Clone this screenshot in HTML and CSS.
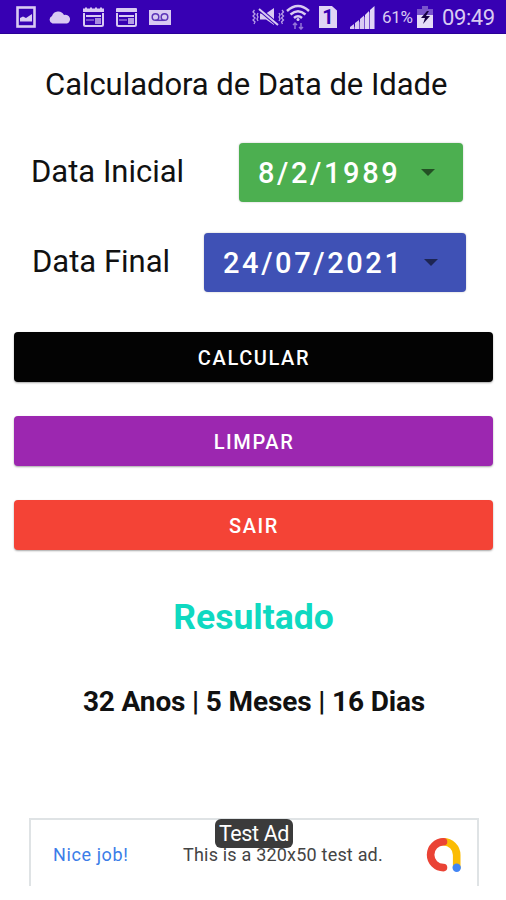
FILE: index.html
```html
<!DOCTYPE html>
<html lang="pt-BR">
<head>
    <meta charset="utf-8">
    <title>Calculadora de Data de Idade</title>
    <link rel="stylesheet" href="styles.css">
</head>
<body>
<div class="status-bar">
    <div class="status-left">
        <svg width="20" height="22" viewBox="0 0 20 22">
            <rect x="1.5" y="1.5" width="17" height="19" fill="none" stroke="#d9caf2" stroke-width="2.6"/>
            <path d="M4 15.500V12l3-1.500 3 1.500 6-4v7.500z" fill="#d9caf2"/>
        </svg>
        <svg width="23" height="14" viewBox="0 0 23 14">
            <path d="M4.500 13.500a4 4 0 0 1-.5-7.500A6.500 6.500 0 0 1 16 5a4.300 4.300 0 0 1 3 8.500z" fill="#d9caf2"/>
        </svg>
        <svg width="21" height="20" viewBox="0 0 21 20">
            <path d="M0 5V1.500h2V.5h2v1h3v-1h2v1h3v-1h2v1h3v-1h2v1h2V5z" fill="#d9caf2"/>
            <path d="M1 6v11.500q0 1.500 1.500 1.500h16q1.500 0 1.500-1.500V6" fill="none" stroke="#d9caf2" stroke-width="2"/>
            <path d="M3 9h15" stroke="#d9caf2" stroke-width="2"/>
            <path d="M3 13h8" stroke="#8f6ad5" stroke-width="1.500"/>
            <rect x="12" y="11" width="6" height="6" fill="#a98be0"/>
        </svg>
        <svg width="21" height="20" viewBox="0 0 21 20">
            <path d="M0 5V1.500q0-.5 1-.5h19q1 0 1 .5V5z" fill="#d9caf2"/>
            <path d="M1 6v11.500q0 1.500 1.500 1.500h16q1.500 0 1.500-1.500V6" fill="none" stroke="#d9caf2" stroke-width="2"/>
            <path d="M3 9h15" stroke="#d9caf2" stroke-width="2"/>
            <path d="M3 13h8" stroke="#8f6ad5" stroke-width="1.500"/>
            <rect x="12" y="11" width="6" height="6" fill="#b59be5"/>
        </svg>
        <svg width="22" height="15" viewBox="0 0 22 15">
            <rect width="22" height="15" fill="#d9caf2"/>
            <circle cx="6.500" cy="7" r="3.300" fill="none" stroke="#5c35b8" stroke-width="1.500"/>
            <circle cx="15.500" cy="7" r="3.300" fill="none" stroke="#5c35b8" stroke-width="1.500"/>
            <path d="M6.500 10.300h9" stroke="#5c35b8" stroke-width="1.500"/>
        </svg>
    </div>
    <div class="status-right">
        <svg class="mute" width="33" height="20" viewBox="0 0 33 20">
            <path d="M2.500 3l-1.500 2 2 2-2 2 2 2-2 2 2 2-1 2M6 6l-1 2 1 2-1 2 1 2M30 3l1.500 2-2 2 2 2-2 2 2 2-2 2 1 2M27 6l1 2-1 2 1 2-1 2" fill="none" stroke="#b79ee6" stroke-width="1.300"/>
            <path d="M8 6.500h6l8-5.500v17l-8-5.500H8z" fill="#d9caf2"/>
            <path d="M7 2l19 16" stroke="#3700b3" stroke-width="4"/>
            <path d="M7 2l19 16" stroke="#d9caf2" stroke-width="2"/>
        </svg>
        <svg class="wifi" width="24" height="26" viewBox="0 0 24 26">
            <g fill="none" stroke="#d9caf2" stroke-width="2.500">
                <path d="M1 7q11-10 22 0"/>
                <path d="M4.500 10.500q7.500-6.500 15 0"/>
                <path d="M8 14q4-3.500 8 0"/>
            </g>
            <circle cx="12" cy="15.500" r="1.500" fill="#d9caf2"/>
            <path d="M9 25v-6m-2 2l2-2 2 2M15 19v6m-2-2l2 2 2-2" fill="none" stroke="#9474d8" stroke-width="1.500"/>
        </svg>
        <div class="sim">1</div>
        <svg class="signal" width="25" height="23" viewBox="0 0 25 23">
            <path d="M0 23v-2l4-3v5zM5 23v-6l4-3v9zM10 23V13l4-3.500V23z" fill="#d9caf2"/>
            <path d="M15 23V9l4-4v18zM20 23V4l4.500-4v23z" fill="#e6dcf7"/>
            <path d="M2 23L24 2v21z" fill="#d9caf2" opacity="0.4"/>
        </svg>
        <span class="percent">61%</span>
        <svg class="battery" width="16" height="22" viewBox="0 0 16 22">
            <path d="M0 3h5V0h6v3h5v7H0z" fill="#7953cc"/>
            <path d="M0 9h16v13H0z" fill="#e6dcf7"/>
            <path d="M10 5l-6 7h4l-2 6 7-8H9l3-5z" fill="#170044"/>
        </svg>
        <span class="time">09:49</span>
    </div>
</div>

<div class="container">
    <h1>Calculadora de Data de Idade</h1>
    <div class="date-row">
        <label>Data Inicial</label>
        <button class="date date-start"><span>8/2/1989</span><i class="arrow"></i></button>
    </div>
    <div class="date-row date-row-end">
        <label>Data Final</label>
        <button class="date date-end"><span>24/07/2021</span><i class="arrow"></i></button>
    </div>
    <div class="actions">
        <button class="action calculate">CALCULAR</button>
        <button class="action clear">LIMPAR</button>
        <button class="action exit">SAIR</button>
    </div>
    <h2>Resultado</h2>
    <p class="result">32 Anos | 5 Meses | 16 Dias</p>
</div>

<div class="ad">
    <span class="ad-label">Test Ad</span>
    <span class="ad-title">Nice job!</span>
    <span class="ad-text">This is a 320x50 test ad.</span>
    <svg class="ad-logo" width="36" height="36" viewBox="0 0 36 36">
        <g fill="none" stroke-width="7.600" stroke-linecap="round">
            <path d="M17.500 4.800A13.200 13.200 0 0 1 30.700 18v12" stroke="#fbbc04"/>
            <path d="M17.500 4.800a12.900 12.900 0 0 0 0 25.800" stroke="#ea4335"/>
        </g>
        <circle cx="30.700" cy="30.700" r="4.200" fill="#4285f4"/>
    </svg>
</div>
</body>
</html>
```

FILE: styles.css
```css
* {
    box-sizing: border-box;
}

body {
    background-color: #fff;
    font-family: Roboto, sans-serif;
    margin: 0;
    height: 900px;
    color: #111;
    overflow: hidden;
}

button {
    border: none;
    padding: 0;
    font-family: inherit;
    font-weight: 500;
    color: #fff;
    cursor: pointer;
}

.status-bar {
    display: flex;
    justify-content: space-between;
    align-items: center;
    height: 34px;
    padding: 1px 11px 0 16px;
    background-color: #3700b3;
    border-bottom: 1px solid #2a0096;
    color: #d9caf2;
}

.status-left,
.status-right {
    display: flex;
    align-items: center;
}

.status-left {
    gap: 12px;
}

.mute {
    margin-left: 2px;
}

.wifi {
    margin: 0 9px 0 1px;
}

.sim {
    width: 18px;
    height: 22px;
    margin-right: 13px;
    background-color: #e0d4f5;
    clip-path: polygon(0 0, 72% 0, 100% 20%, 100% 100%, 0 100%);
    color: #3700b3;
    font-size: 20px;
    font-weight: 700;
    line-height: 23px;
    text-align: center;
}

.signal {
    margin-right: 7px;
}

.percent {
    width: 31px;
    margin-right: 4px;
    font-size: 17px;
    letter-spacing: -0.3px;
}

.time {
    width: 53px;
    margin-left: 9px;
    font-size: 22px;
    letter-spacing: -0.4px;
}

.container {
    padding: 31px 13px 0 14px;
}

h1 {
    margin: 0 0 37px 31px;
    font-size: 31px;
    font-weight: 400;
    line-height: 40px;
    letter-spacing: -0.05px;
    white-space: nowrap;
}

.date-row {
    display: flex;
    justify-content: space-between;
    align-items: center;
    height: 60px;
    padding: 0 30px 0 17px;
}

.date-row-end {
    margin-top: 30px;
    padding: 0 27px 0 18px;
}

label {
    margin-top: -1px;
    font-size: 31px;
    white-space: nowrap;
}

.date {
    display: flex;
    justify-content: space-between;
    align-items: center;
    height: 59px;
    padding: 1px 28px 0 19px;
    border-radius: 4px;
    box-shadow: 0 0 2px rgba(0, 0, 0, 0.25);
    font-size: 29px;
    letter-spacing: 2.6px;
}

.date-start {
    width: 224px;
    background-color: #4caf50;
}

.date-end {
    width: 262px;
    background-color: #3f51b5;
}

.arrow {
    border: 7px solid transparent;
    border-top-color: rgba(0, 0, 0, 0.54);
    border-bottom: none;
}

.actions {
    display: flex;
    flex-direction: column;
    gap: 34px;
    margin-top: 40px;
}

.action {
    height: 50px;
    padding: 2px 0 0 1px;
    border-radius: 4px;
    box-shadow: 0 1px 2px rgba(0, 0, 0, 0.35);
    font-size: 20px;
    letter-spacing: 1.6px;
}

.calculate {
    background-color: #030303;
}

.clear {
    background-color: #9c27b0;
}

.exit {
    background-color: #f44336;
}

h2 {
    margin: 45px 0 0;
    color: #0fd9c1;
    font-size: 35.5px;
    line-height: 44px;
    text-align: center;
}

.result {
    margin: 45px 0 0 1px;
    font-size: 28px;
    font-weight: 700;
    line-height: 36px;
    letter-spacing: -0.14px;
    text-align: center;
    white-space: nowrap;
}

.ad {
    position: relative;
    display: flex;
    align-items: center;
    width: 450px;
    height: 68px;
    margin: 98px 0 0 29px;
    padding: 3px 15px 0 22px;
    border: 2px solid #dfe3e5;
    border-bottom: none;
    font-size: 18px;
}

.ad-title {
    width: 130px;
    color: #3b7de8;
    letter-spacing: 0.6px;
}

.ad-text {
    color: #444;
    letter-spacing: 0.2px;
    white-space: nowrap;
}

.ad-logo {
    margin-left: auto;
}

/* label sits on top of the ad */
.ad-label {
    position: absolute;
    top: -1px;
    left: 184px;
    width: 78px;
    height: 29px;
    border-radius: 6px;
    background-color: #3b3b3b;
    color: #fff;
    font-size: 21.5px;
    letter-spacing: -0.4px;
    line-height: 30px;
    text-align: center;
}
```
